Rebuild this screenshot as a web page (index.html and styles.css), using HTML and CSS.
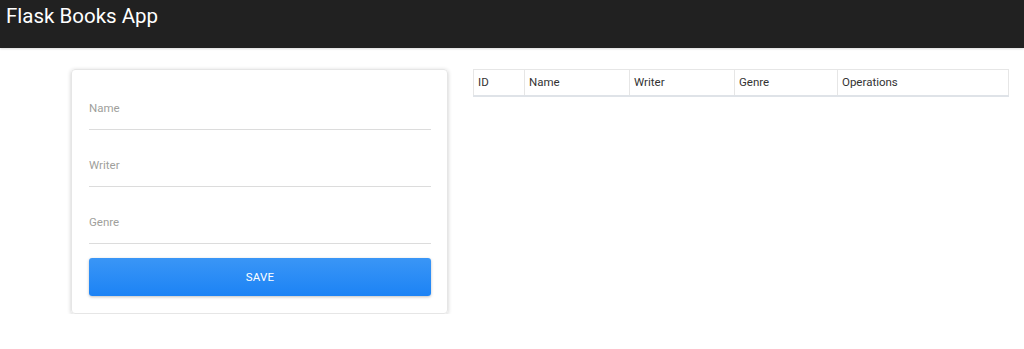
FILE: index.html
```html
<!DOCTYPE html>
<html>
<head>
<meta charset="utf-8">
<title>Flask Books App</title>
<link rel="stylesheet" href="styles.css">
</head>
<body>
<header class="topbar">
  <h1 class="brand">Flask Books App</h1>
</header>
<main class="content">
  <form class="card">
    <label class="field"><span class="field-label">Name</span></label>
    <label class="field"><span class="field-label">Writer</span></label>
    <label class="field"><span class="field-label">Genre</span></label>
    <button type="button" class="save-btn">SAVE</button>
  </form>
  <div class="table-wrap">
    <table class="books">
      <thead>
        <tr>
          <th class="c-id">ID</th>
          <th class="c-name">Name</th>
          <th class="c-writer">Writer</th>
          <th class="c-genre">Genre</th>
          <th class="c-ops">Operations</th>
        </tr>
      </thead>
    </table>
  </div>
</main>
</body>
</html>
```
FILE: styles.css
```css
* { box-sizing: border-box; }
html, body { margin: 0; padding: 0; background: #fff; }
body { font-family: Roboto, "Noto Sans", "Liberation Sans", sans-serif; }

.topbar {
  height: 48px;
  background: #212121;
  padding: 4px 6px;
  box-shadow: 0 1px 2px rgba(0,0,0,0.15);
}
.brand {
  margin: 0;
  font-size: 20.5px;
  line-height: 24px;
  font-weight: 400;
  color: #fff;
}

.content {
  display: flex;
  align-items: flex-start;
  padding: 21px 0 0 71px;
  gap: 25px;
}

.card {
  width: 377px;
  margin: 0;
  padding: 3px 16px 17px 17px;
  border: 1px solid #e6e6e6;
  border-radius: 4px;
  box-shadow: 0 1px 4px rgba(0,0,0,0.2);
  display: flex;
  flex-direction: column;
}
.field {
  display: flex;
  align-items: flex-end;
  height: 57px;
  padding-bottom: 13px;
  border-bottom: 1px solid #dcdcdc;
}
.field-label {
  font-size: 11.5px;
  line-height: 16px;
  color: #a09f9c;
}
.save-btn {
  margin-top: 14px;
  height: 38px;
  border: none;
  border-radius: 3px;
  background: linear-gradient(to bottom, #3a96f6, #1c83f5);
  color: #fff;
  font-family: inherit;
  font-size: 11.5px;
  letter-spacing: 0.2px;
  box-shadow: 0 1px 3px rgba(0,0,0,0.25);
  cursor: pointer;
}

.table-wrap { width: 536px; }
.books {
  width: 100%;
  border-collapse: collapse;
  table-layout: fixed;
}
.books th {
  height: 26px;
  padding: 0 0 0 4px;
  text-align: left;
  font-weight: 400;
  font-size: 11.5px;
  color: #333;
  border: 1px solid #e6e6e6;
  border-bottom: 2px solid #dfe3e8;
}
.c-id { width: 51px; }
.c-name { width: 105px; }
.c-writer { width: 105px; }
.c-genre { width: 103px; }
```
